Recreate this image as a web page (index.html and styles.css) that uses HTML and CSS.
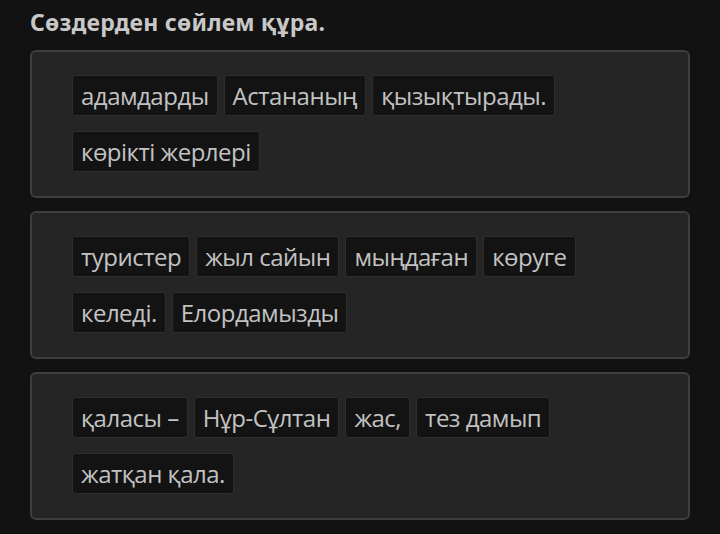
FILE: index.html
```html
<!DOCTYPE html>
<html>
<head>
<meta name="viewport" content="width=device-width, initial-scale=1.0" />
<link rel="stylesheet" href="styles.css">
</head>
<body>
<div id="page">
	<h1 class="title">Сөздерден сөйлем құра.</h1>
	<div class="group">
		<span class="word">адамдарды</span>
		<span class="word">Астананың</span>
		<span class="word">қызықтырады.</span>
		<span class="word">көрікті жерлері</span>
	</div>
	<div class="group">
		<span class="word">туристер</span>
		<span class="word">жыл сайын</span>
		<span class="word">мыңдаған</span>
		<span class="word">көруге</span>
		<span class="word">келеді.</span>
		<span class="word">Елордамызды</span>
	</div>
	<div class="group">
		<span class="word">қаласы –</span>
		<span class="word">Нұр-Сұлтан</span>
		<span class="word">жас,</span>
		<span class="word">тез дамып</span>
		<span class="word">жатқан қала.</span>
	</div>
</div>
</body>
</html>
```

FILE: styles.css
```css
html, body {margin:0px; padding:0px;}
body {
	background: #121212;
	font-family: "Open Sans", "Noto Sans", sans-serif;
	color: #c4c4c4;
}
#page {
	padding: 7px 30px 0px 30px;
	display: flex;
	flex-direction: column;
	gap: 13px;
}
.title {
	margin: 0px;
	font-family: "Noto Sans", "Open Sans", sans-serif;
	font-size: 23px;
	font-weight: bold;
	letter-spacing: 0.2px;
	line-height: 30px;
	color: #c8c8c8;
}
.group {
	background: #252525;
	border: 2px solid #3e3e3e;
	border-radius: 6px;
	padding: 23px 40px 24px 40px;
	height: 97px;
	display: flex;
	flex-wrap: wrap;
	align-content: flex-start;
	column-gap: 6px;
	row-gap: 15px;
}
.word {
	background: #131313;
	border: 1px solid #2e2e2e;
	border-radius: 3px;
	padding: 0px 8px;
	height: 39px;
	line-height: 39px;
	font-size: 24px;
	letter-spacing: -0.5px;
	color: #c2c2c2;
	white-space: nowrap;
}
```
